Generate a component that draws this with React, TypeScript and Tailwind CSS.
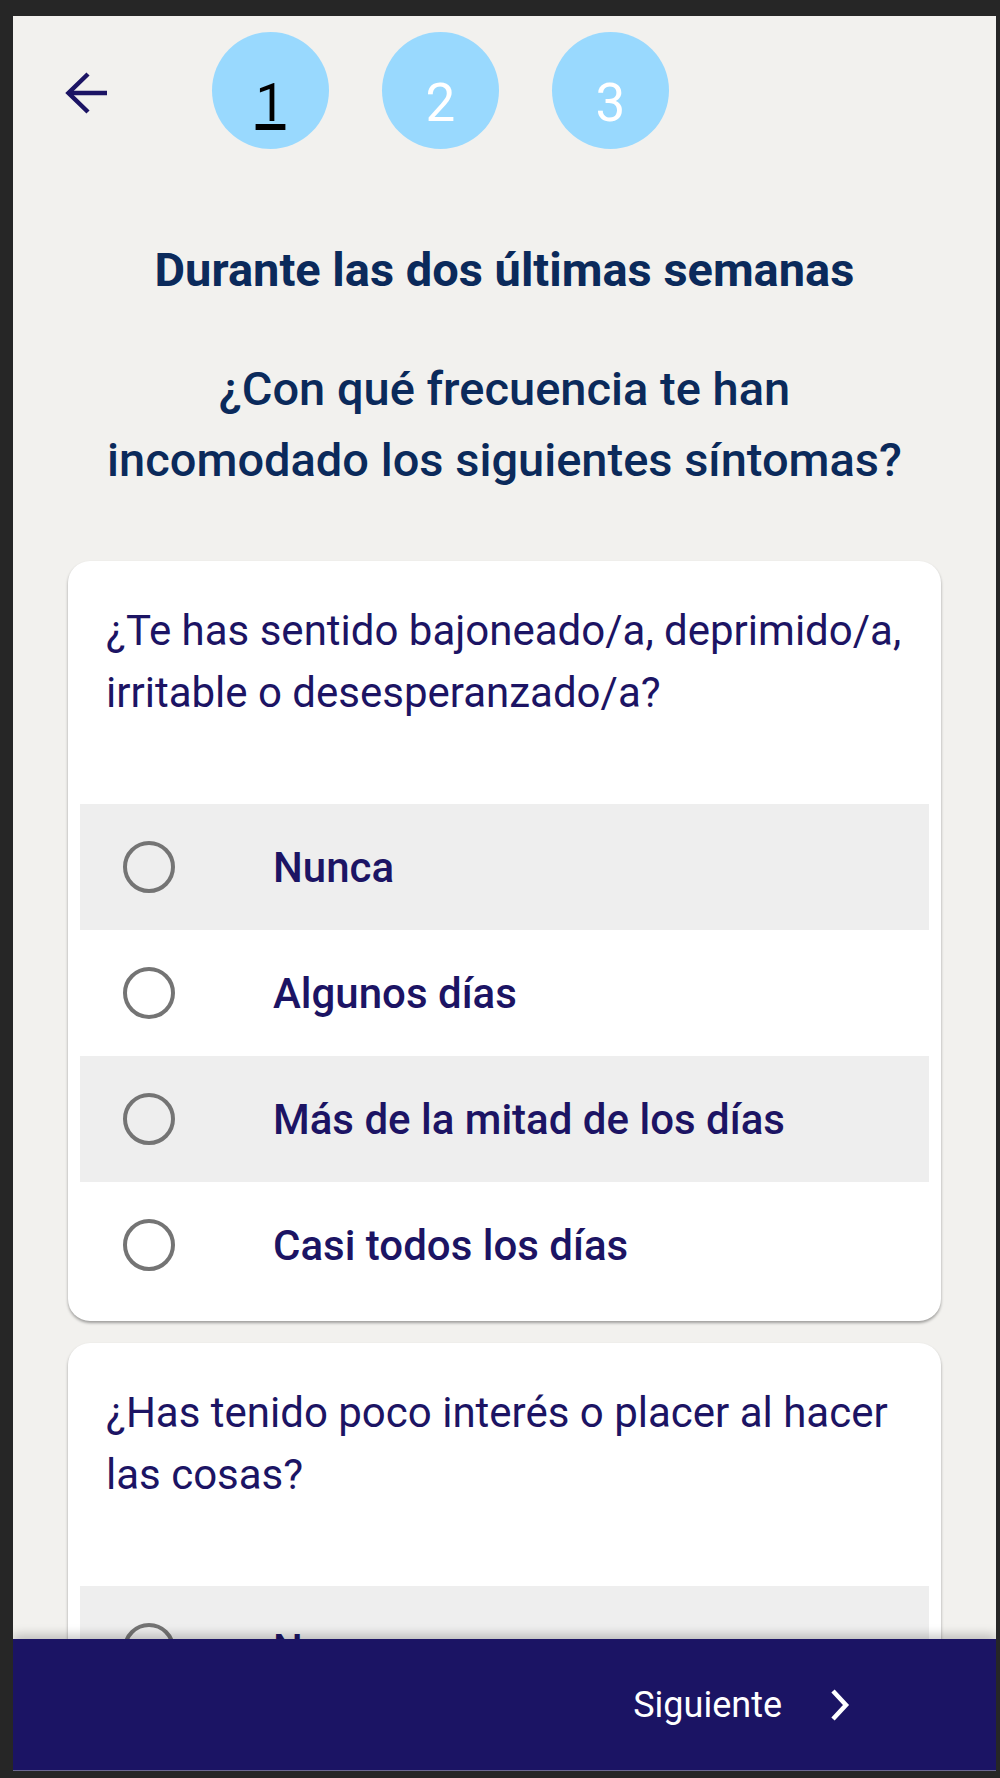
import React from 'react'

const options = ['Nunca', 'Algunos días', 'Más de la mitad de los días', 'Casi todos los días']

const questions = [
  '¿Te has sentido bajoneado/a, deprimido/a, irritable o desesperanzado/a?',
  '¿Has tenido poco interés o placer al hacer las cosas?',
]

function StepCircle({ n, active }: { n: number; active?: boolean }) {
  return (
    <div className="flex h-[117px] w-[117px] items-center justify-center rounded-full bg-[#99d9fe] pt-[26px]">
      <span
        className={
          active
            ? 'text-[53px] leading-none text-black underline decoration-[6px] underline-offset-[3px]'
            : 'text-[53px] leading-none text-white'
        }
      >
        {n}
      </span>
    </div>
  )
}

function QuestionCard({ text }: { text: string }) {
  return (
    <div className="mx-[55px] rounded-[22px] bg-white pb-[13px] shadow-[0_2px_3px_rgba(0,0,0,0.35)]">
      <p className="px-[38px] pt-[39px] text-[42px] leading-[62px] text-[#1c1464]">{text}</p>
      <div className="mt-[80px] px-[12px]">
        {options.map((opt, i) => (
          <div
            key={opt}
            className={`flex h-[126px] items-center pl-[43px] ${i % 2 === 0 ? 'bg-[#eeeeee]' : 'bg-white'}`}
          >
            <div className="h-[52px] w-[52px] shrink-0 rounded-full border-[4px] border-[#747474]" />
            <span className="ml-[98px] text-[42px] font-medium text-[#1c1464]">{opt}</span>
          </div>
        ))}
      </div>
    </div>
  )
}

export default function App() {
  return (
    <div className="h-[1778px] bg-[#262626] pb-[7px] pl-[13px] pr-[4px] pt-[16px] font-['Roboto',sans-serif]">
      <div className="relative h-full overflow-hidden bg-[#f2f1ee]">
        <div className="flex items-center pl-[52px] pt-[16px]">
          <svg className="mt-[4px]" width="42" height="42" viewBox="0 0 42 42" fill="none" stroke="#1c1464" strokeWidth="4.5">
            <path d="M42 21H4" />
            <path d="M23 2L3.5 21L23 40" />
          </svg>
          <div className="ml-[105px] flex gap-[53px]">
            <StepCircle n={1} active />
            <StepCircle n={2} />
            <StepCircle n={3} />
          </div>
        </div>

        <h1 className="mt-[94px] text-center text-[47px] font-bold leading-[54px] text-[#0b2a5b]">
          Durante las dos últimas semanas
        </h1>
        <h2 className="mt-[56px] text-center text-[47px] font-medium leading-[71px] text-[#0b2a5b]">
          ¿Con qué frecuencia te han
          <br />
          incomodado los siguientes síntomas?
        </h2>

        <div className="mt-[66px] flex flex-col gap-[22px]">
          {questions.map((q) => (
            <QuestionCard key={q} text={q} />
          ))}
        </div>

        <div className="absolute bottom-0 left-0 right-0 flex h-[132px] items-center justify-end border-b border-[#6b6791] bg-[#1b1464] pr-[146px] shadow-[0_-4px_10px_rgba(0,0,0,0.22)]">
          <span className="text-[36px] text-white">Siguiente</span>
          <svg className="ml-[48px]" width="20" height="32" viewBox="0 0 20 32" fill="none" stroke="white" strokeWidth="4.5">
            <path d="M3 2L16 16L3 30" />
          </svg>
        </div>
      </div>
    </div>
  )
}
